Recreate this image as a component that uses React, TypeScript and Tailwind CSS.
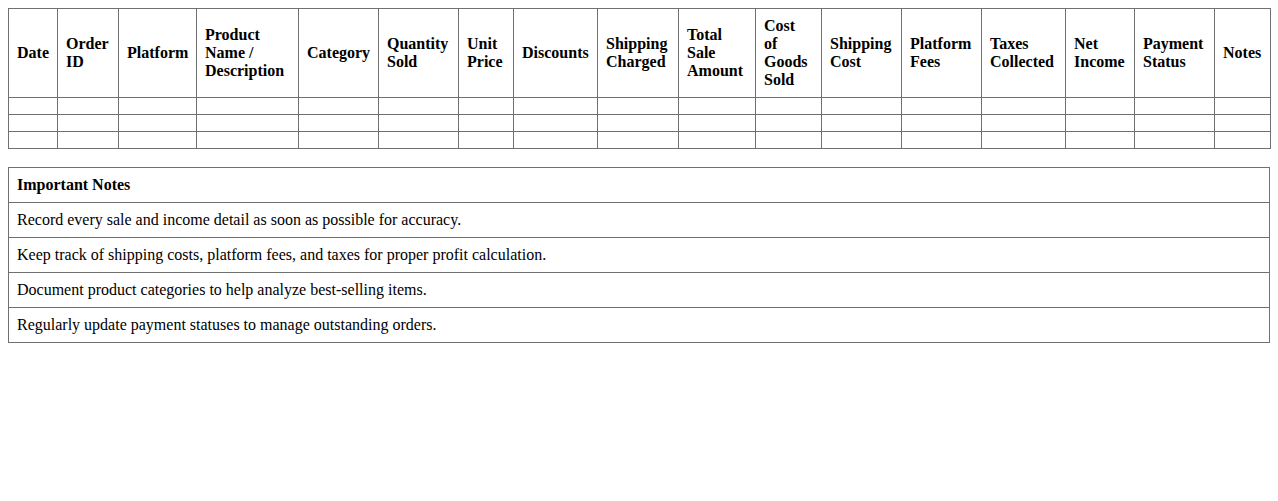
const columns: [string, number][] = [
  ['Date', 49],
  ['Order ID', 61],
  ['Platform', 78],
  ['Product Name / Description', 102],
  ['Category', 80],
  ['Quantity Sold', 80],
  ['Unit Price', 55],
  ['Discounts', 84],
  ['Shipping Charged', 81],
  ['Total Sale Amount', 77],
  ['Cost of Goods Sold', 66],
  ['Shipping Cost', 80],
  ['Platform Fees', 80],
  ['Taxes Collected', 84],
  ['Net Income', 69],
  ['Payment Status', 80],
  ['Notes', 56],
]

const notes = [
  'Record every sale and income detail as soon as possible for accuracy.',
  'Keep track of shipping costs, platform fees, and taxes for proper profit calculation.',
  'Document product categories to help analyze best-selling items.',
  'Regularly update payment statuses to manage outstanding orders.',
]

const App = () => {
  return (
    <div className="p-2 bg-white text-black font-['Liberation_Serif','Times_New_Roman',serif] text-base min-h-[501px]">
      <table className="w-full table-fixed border-collapse">
        <colgroup>
          {columns.map(([name, w]) => (
            <col key={name} style={{ width: w }} />
          ))}
        </colgroup>
        <thead>
          <tr>
            {columns.map(([name]) => (
              <th key={name} className="border border-[#707070] p-2 text-left align-middle font-bold leading-[18px]">
                {name === 'Cost of Goods Sold' ? (
                  <>
                    Cost
                    <br />
                    of
                    <br />
                    Goods
                    <br />
                    Sold
                  </>
                ) : (
                  name
                )}
              </th>
            ))}
          </tr>
        </thead>
        <tbody>
          {[0, 1, 2].map((r) => (
            <tr key={r}>
              {columns.map(([name]) => (
                <td key={name} className="border border-[#707070] p-2 h-[17px]"></td>
              ))}
            </tr>
          ))}
        </tbody>
      </table>

      <table className="w-full border-collapse mt-[18px]">
        <thead>
          <tr>
            <th className="border border-[#707070] p-2 text-left font-bold leading-[18px]">Important Notes</th>
          </tr>
        </thead>
        <tbody>
          {notes.map((n) => (
            <tr key={n}>
              <td className="border border-[#707070] p-2 leading-[18px]">{n}</td>
            </tr>
          ))}
        </tbody>
      </table>
    </div>
  )
}

export default App
